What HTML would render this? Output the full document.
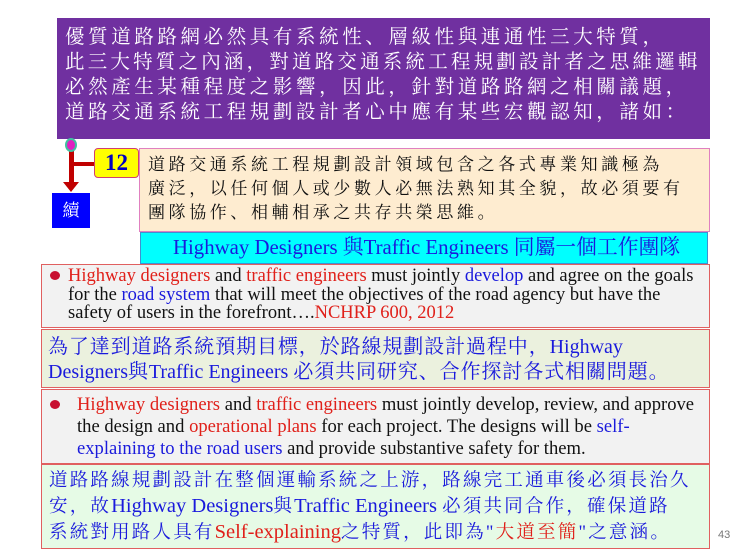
<!DOCTYPE html>
<html><head><meta charset="utf-8"><style>
body{margin:0;width:740px;height:551px;background:#fff;position:relative;overflow:hidden;font-family:"Liberation Serif","Noto Serif CJK SC",serif}
.a{position:absolute;box-sizing:border-box}
.l{white-space:nowrap;display:block}
.r{color:#e0201a}.b{color:#1a1adc}.k{color:#111}
.e{letter-spacing:0}
</style></head><body>
<div class="a" style="left:57px;top:18px;width:653px;height:121px;background:#7030a0;color:#fff;font-size:19.5px;letter-spacing:3.6px;line-height:25px;padding:7px 0 0 8px">
<span class="l">優質道路路網必然具有系統性、層級性與連通性三大特質，</span>
<span class="l" style="letter-spacing:3.2px">此三大特質之內涵，對道路交通系統工程規劃設計者之思維邏輯</span>
<span class="l">必然產生某種程度之影響，因此，針對道路路網之相關議題，</span>
<span class="l">道路交通系統工程規劃設計者心中應有某些宏觀認知，諸如：</span>
</div>
<div class="a" style="left:69px;top:145px;width:5px;height:40px;background:#c00000"></div>
<div class="a" style="left:70px;top:162px;width:26px;height:4px;background:#c00000"></div>
<div class="a" style="left:63px;top:182px;width:0;height:0;border-left:8px solid transparent;border-right:8px solid transparent;border-top:10px solid #c00000"></div>
<div class="a" style="left:65px;top:138px;width:12px;height:14px;border-radius:50%;background:#e020c0;border:2px solid #40c0a0"></div>
<div class="a" style="left:52px;top:193px;width:38px;height:35px;background:#0000ff;color:#fff;font-size:17px;text-align:center;line-height:35px">續</div>
<div class="a" style="left:94px;top:148px;width:45px;height:30px;background:#ffff00;border:1.5px solid #d04070;border-radius:4px;color:#0000c0;font-weight:bold;font-size:23px;text-align:center;line-height:27px">12</div>
<div class="a" style="left:139px;top:148px;width:571px;height:84px;background:#feecd0;border:1px solid #e080c0;font-size:17px;letter-spacing:3.6px;line-height:24px;padding:4px 0 0 8px;color:#111">
<span class="l">道路交通系統工程規劃設計領域包含之各式專業知識極為</span>
<span class="l">廣泛，以任何個人或少數人必無法熟知其全貌，故必須要有</span>
<span class="l">團隊協作、相輔相承之共存共榮思維。</span>
</div>
<div class="a" style="left:140px;top:232px;width:568px;height:32px;background:#00ffff;border:1px solid #4090d0;color:#1a1adc;font-size:20.8px;line-height:30px;padding-left:32px;white-space:nowrap">Highway Designers 與Traffic Engineers 同屬一個工作團隊</div>
<div class="a" style="left:41px;top:264px;width:669px;height:64px;background:#f2f2f2;border:1.5px solid #e06060;font-size:18.5px;line-height:18.5px;padding:2px 0 0 26px;color:#111">
<span class="a" style="left:8px;top:6px;width:10px;height:9px;border-radius:50%;background:#c81030"></span>
<span class="l"><span class="r">Highway designers</span> and <span class="r">traffic engineers</span> must jointly <span class="b">develop</span> and agree on the goals</span>
<span class="l">for the <span class="b">road system</span> that will meet the objectives of the road agency but have the</span>
<span class="l">safety of users in the forefront….<span class="r">NCHRP 600, 2012</span></span>
</div>
<div class="a" style="left:41px;top:329px;width:669px;height:59px;background:#ebf1de;border:1.5px solid #e06060;color:#1a1adc;font-size:20px;line-height:24.5px;padding:5px 0 0 6px;letter-spacing:0.9px">
<span class="l">為了達到道路系統預期目標，於路線規劃設計過程中，<span class="e">Highway</span></span>
<span class="l"><span class="e">Designers</span>與<span class="e">Traffic Engineers </span>必須共同研究、合作探討各式相關問題。</span>
</div>
<div class="a" style="left:41px;top:389px;width:669px;height:75px;background:#f2f2f2;border:1.5px solid #e06060;font-size:18.6px;line-height:22px;padding:4px 0 0 35px;color:#111">
<span class="a" style="left:8px;top:10px;width:10px;height:9px;border-radius:50%;background:#c81030"></span>
<span class="l"><span class="r">Highway designers</span> and <span class="r">traffic engineers</span> must jointly develop, review, and approve</span>
<span class="l">the design and <span class="r">operational plans</span> for each project. The designs will be <span class="b">self-</span></span>
<span class="l"><span class="b">explaining to the road users</span> and provide substantive safety for them.</span>
</div>
<div class="a" style="left:41px;top:464px;width:669px;height:85px;background:#e6fbe6;border:1.5px solid #e06060;color:#1a1adc;font-size:18.5px;line-height:25px;padding:4px 0 0 7px;letter-spacing:2.2px">
<span class="l">道路路線規劃設計在整個運輸系統之上游，路線完工通車後必須長治久</span>
<span class="l">安，故<span class="e" style="font-size:20.5px">Highway Designers</span>與<span class="e" style="font-size:20.5px">Traffic Engineers </span>必須共同合作，確保道路</span>
<span class="l">系統對用路人具有<span class="r e" style="font-size:20.5px">Self-explaining</span>之特質，此即為"<span class="r">大道至簡</span>"之意涵。</span>
</div>
<div class="a" style="left:718px;top:529px;font-family:'Liberation Sans',sans-serif;font-size:11px;color:#777">43</div>
</body></html>
